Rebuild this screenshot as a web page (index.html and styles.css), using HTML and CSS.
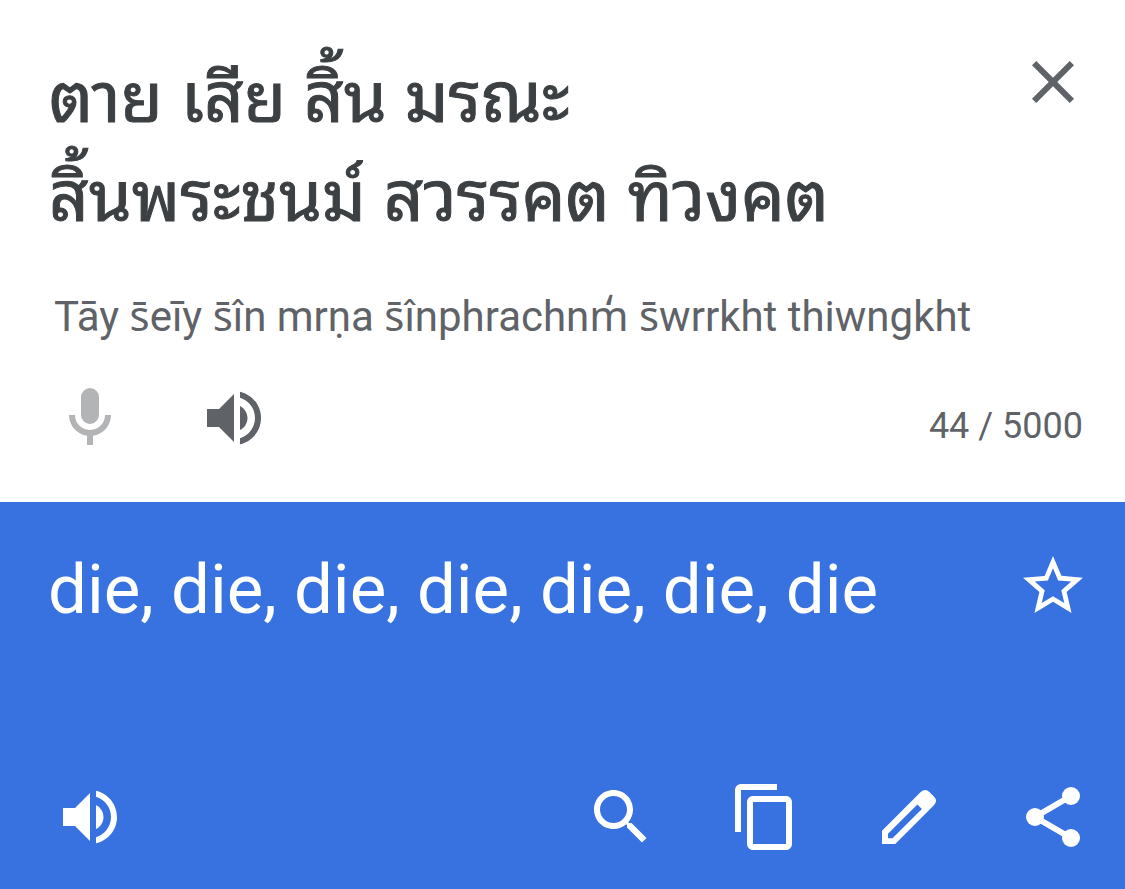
FILE: index.html
```html
<!DOCTYPE html>
<html lang="en">
<head>
<meta charset="utf-8">
<meta name="viewport" content="width=device-width, initial-scale=1">
<title>Translate</title>
<link rel="stylesheet" href="styles.css">
</head>
<body>
<main class="translator">
  <section class="source" aria-label="Source text">
    <div class="row">
      <p class="source-text" lang="th">ตาย เสีย สิ้น มรณะ<br>สิ้นพระชนม์ สวรรคต ทิวงคต</p>
      <button class="icon-button clear" type="button" aria-label="Clear">
        <svg class="icon" viewBox="0 0 24 24"><path d="M19 6.410 17.590 5 12 10.590 6.410 5 5 6.410 10.590 12 5 17.590 6.410 19 12 13.410 17.590 19 19 17.590 13.410 12z"/></svg>
      </button>
    </div>
    <p class="romanized">Tāy s̄eīy s̄în mrṇa s̄înphrachnm̒ s̄wrrkht thiwngkht</p>
    <div class="row source-tools">
      <div class="group">
        <button class="icon-button muted" type="button" aria-label="Speak">
          <svg class="icon" viewBox="0 0 24 24"><path d="M12 14a3 3 0 0 0 3-3V5a3 3 0 0 0-6 0v6a3 3 0 0 0 3 3zM17 11a5 5 0 0 1-10 0H5a7 7 0 0 0 6 6.920V21h2v-3.080A7 7 0 0 0 19 11z"/></svg>
        </button>
        <button class="icon-button" type="button" aria-label="Listen to source">
          <svg class="icon" viewBox="0 0 24 24"><path d="M3 9v6h4l5 5V4L7 9H3zm13.500 3c0-1.770-1.020-3.290-2.500-4.030v8.050c1.480-.73 2.500-2.250 2.500-4.020zM14 3.230v2.060c2.890.86 5 3.540 5 6.710s-2.110 5.850-5 6.710v2.060c4.010-.91 7-4.490 7-8.770s-2.990-7.860-7-8.770z"/></svg>
        </button>
      </div>
      <span class="counter">44 / 5000</span>
    </div>
  </section>
  <section class="result" aria-label="Translation">
    <div class="row">
      <p class="result-text">die, die, die, die, die, die, die</p>
      <button class="icon-button" type="button" aria-label="Save">
        <svg class="icon" viewBox="0 0 24 24"><path d="M22 9.240l-7.190-.62L12 2 9.190 8.630 2 9.240l5.460 4.730L5.820 21 12 17.270 18.180 21l-1.630-7.030L22 9.240zM12 15.400l-3.760 2.270 1-4.280-3.320-2.880 4.380-.38L12 6.100l1.710 4.040 4.380.38-3.320 2.880 1 4.280L12 15.400z"/></svg>
      </button>
    </div>
    <div class="row result-tools">
      <button class="icon-button" type="button" aria-label="Listen to translation">
        <svg class="icon" viewBox="0 0 24 24"><path d="M3 9v6h4l5 5V4L7 9H3zm13.500 3c0-1.770-1.020-3.290-2.500-4.030v8.050c1.480-.73 2.500-2.250 2.500-4.020zM14 3.230v2.060c2.890.86 5 3.540 5 6.710s-2.110 5.850-5 6.710v2.060c4.010-.91 7-4.490 7-8.770s-2.990-7.860-7-8.770z"/></svg>
      </button>
      <div class="group">
        <button class="icon-button" type="button" aria-label="Search">
          <svg class="icon" viewBox="0 0 24 24"><path d="M15.500 14h-.79l-.28-.27C15.410 12.590 16 11.110 16 9.500 16 5.910 13.090 3 9.500 3S3 5.910 3 9.500 5.910 16 9.500 16c1.610 0 3.090-.59 4.230-1.570l.27.28v.79l5 4.990L20.490 19l-4.990-5zm-6 0C7.010 14 5 11.990 5 9.500S7.010 5 9.500 5 14 7.010 14 9.500 11.990 14 9.500 14z"/></svg>
        </button>
        <button class="icon-button" type="button" aria-label="Copy">
          <svg class="icon" viewBox="0 0 24 24"><path d="M16 1H4c-1.100 0-2 .9-2 2v14h2V3h12V1zm3 4H8c-1.100 0-2 .9-2 2v14c0 1.100.9 2 2 2h11c1.100 0 2-.9 2-2V7c0-1.100-.9-2-2-2zm0 16H8V7h11v14z"/></svg>
        </button>
        <button class="icon-button" type="button" aria-label="Edit">
          <svg class="icon" viewBox="0 0 24 24"><path fill-rule="evenodd" d="M3 16.600V21h4.400L20.300 8.100Q21.700 6.600 20.300 5.200L18.800 3.700Q17.400 2.300 15.900 3.700zM5 17.600 14.800 7.800l1.500 1.500L6.500 19.100H5z"/></svg>
        </button>
        <button class="icon-button" type="button" aria-label="Share">
          <svg class="icon" viewBox="0 0 24 24"><path d="M18 5 6 12l12 7" fill="none" stroke="currentColor" stroke-width="2"/><circle cx="18" cy="5" r="3"/><circle cx="6" cy="12" r="3"/><circle cx="18" cy="19" r="3"/></svg>
        </button>
      </div>
    </div>
  </section>
</main>
</body>
</html>
```
FILE: styles.css
```css
* { box-sizing: border-box; }
body { margin: 0; font-family: Roboto, "Noto Sans", sans-serif; color: #5f6368; background: #fff; }
p { margin: 0; }
.translator { min-height: 100vh; display: flex; flex-direction: column; }
.source { padding: 42px 36px 48px 48px; }
.row, .group { display: flex; align-items: flex-start; justify-content: space-between; }
.group { gap: 72px; }
.source-text { padding-left: 1px; font-family: "Noto Sans Thai Looped", "Noto Looped Thai", "Droid Sans Thai", Loma, Garuda, Waree, Umpush, Tahoma, "Noto Serif Thai", Roboto, sans-serif; font-size: 69px; line-height: 99px; color: #3c4043; -webkit-text-stroke: 1px #3c4043; white-space: nowrap; }
.romanized { margin-top: 51px; padding-left: 6px; font-size: 42px; line-height: 52px; }
.source-tools { margin-top: 39px; padding-left: 6px; }
.icon-button { flex: none; width: 72px; height: 72px; padding: 0; border: 0; background: none; color: inherit; cursor: pointer; }
.clear { margin-top: 4px; }
.icon { display: block; width: 100%; height: 100%; fill: currentColor; }
.muted { color: #b2b4b6; }
.counter { padding: 20px 6px 0 0; font-size: 36px; line-height: 48px; }
.result { flex: 1; display: flex; flex-direction: column; justify-content: space-between; padding: 48px 36px 36px 48px; background: #3871e0; color: #fff; }
.result-text { font-size: 69px; line-height: 80px; }
.result-tools { padding-left: 6px; }
```
